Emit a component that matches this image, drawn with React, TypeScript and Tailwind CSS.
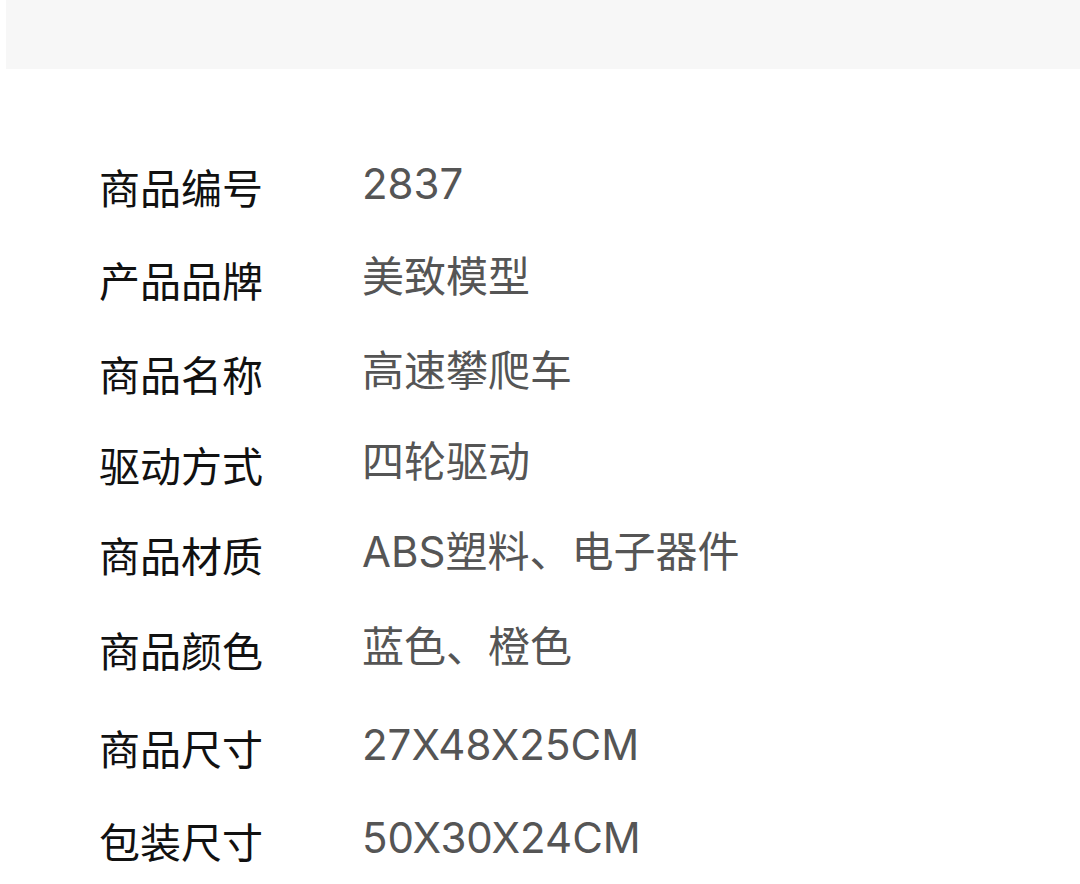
import React from 'react';

interface SpecRow {
  label: string;
  value: string;
  gap: string;
}

const rows: SpecRow[] = [
  { label: '商品编号', value: '2837', gap: 'mt-0' },
  { label: '产品品牌', value: '美致模型', gap: 'mt-[45px]' },
  { label: '商品名称', value: '高速攀爬车', gap: 'mt-[46px]' },
  { label: '驱动方式', value: '四轮驱动', gap: 'mt-[43px]' },
  { label: '商品材质', value: 'ABS塑料、电子器件', gap: 'mt-[42px]' },
  { label: '商品颜色', value: '蓝色、橙色', gap: 'mt-[47px]' },
  { label: '商品尺寸', value: '27X48X25CM', gap: 'mt-[50px]' },
  { label: '包装尺寸', value: '50X30X24CM', gap: 'mt-[45px]' },
];

export default function App() {
  return (
    <div
      className="w-[1080px] h-[884px] bg-white overflow-hidden"
      style={{ fontFamily: '"Noto Sans CJK SC", "Noto Sans", sans-serif' }}
    >
      <div className="ml-[6px] h-[69px] bg-[#f7f7f7]" />

      <div className="flex flex-col pt-[94px] pl-[99px]">
        {rows.map((row) => (
          <div key={row.label} className={`flex items-center h-[48px] ${row.gap}`}>
            <span className="w-[263px] mb-[3px] text-[41px] leading-[48px] text-[#111111]">
              {row.label}
            </span>
            <span className="mb-[6px] font-['Inter','Noto_Sans_CJK_SC',sans-serif] text-[42px] leading-[48px] text-[#555555]">
              {row.value}
            </span>
          </div>
        ))}
      </div>
    </div>
  );
}
